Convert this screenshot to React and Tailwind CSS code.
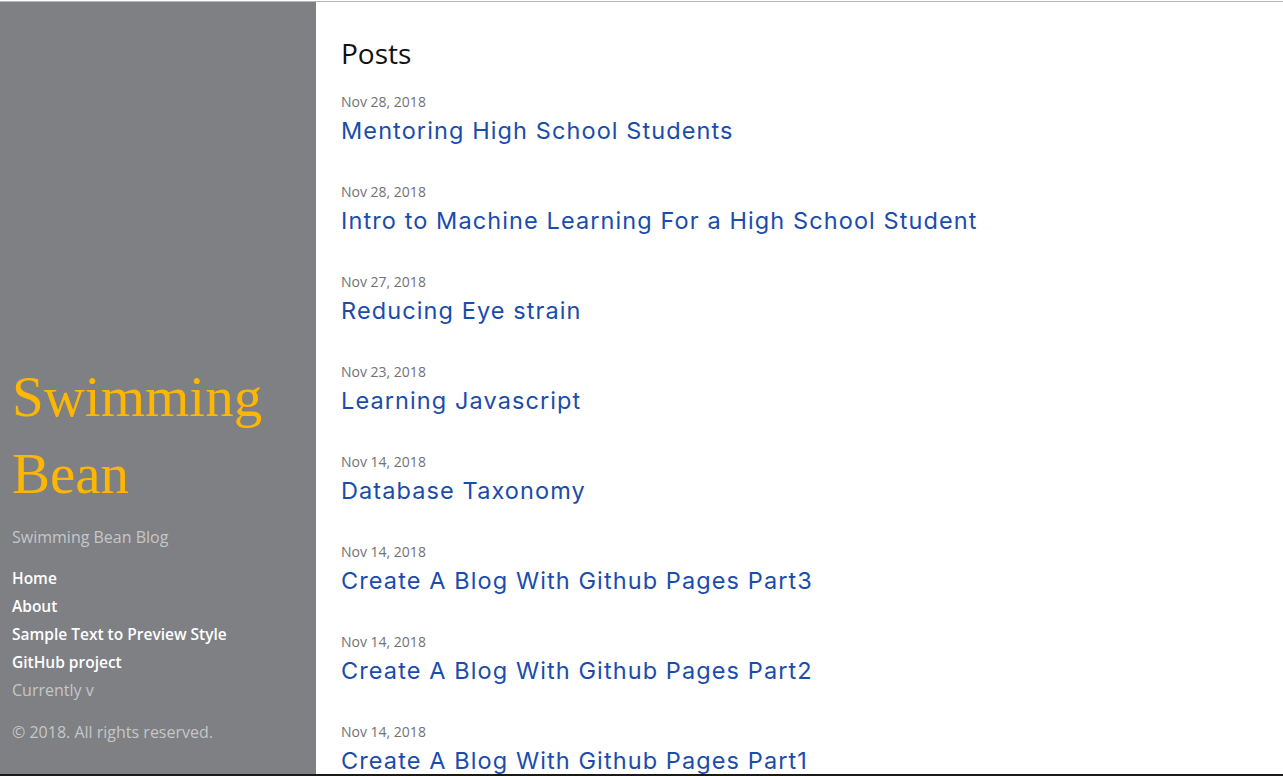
const posts = [
  { date: 'Nov 28, 2018', title: 'Mentoring High School Students' },
  { date: 'Nov 28, 2018', title: 'Intro to Machine Learning For a High School Student' },
  { date: 'Nov 27, 2018', title: 'Reducing Eye strain' },
  { date: 'Nov 23, 2018', title: 'Learning Javascript' },
  { date: 'Nov 14, 2018', title: 'Database Taxonomy' },
  { date: 'Nov 14, 2018', title: 'Create A Blog With Github Pages Part3' },
  { date: 'Nov 14, 2018', title: 'Create A Blog With Github Pages Part2' },
  { date: 'Nov 14, 2018', title: 'Create A Blog With Github Pages Part1' },
];

const navItems = ['Home', 'About', 'Sample Text to Preview Style', 'GitHub project'];

// Sidebar with blog title and nav
const Sidebar = () => {
  return (
    <aside className="w-[316px] shrink-0 bg-[#7e8084] flex flex-col justify-end px-[12px] pb-[30px] font-['Open_Sans',sans-serif]">
      <h1 className="font-['Liberation_Serif',serif] text-[57px] leading-[77px] text-[#ffb600] font-normal">
        Swimming Bean
      </h1>
      <p className="mt-[13px] text-[16px] leading-[24px] text-[#c6c7c9]">Swimming Bean Blog</p>
      <nav className="mt-[15px] flex flex-col">
        {navItems.map((item) => (
          <a key={item} href="#" className="block text-[15.5px] leading-[28px] font-semibold text-white">
            {item}
          </a>
        ))}
        <span className="block text-[16px] leading-[28px] text-[#c6c7c9]">Currently v</span>
      </nav>
      <p className="mt-[16px] text-[16px] leading-[24px] text-[#c6c7c9]">© 2018. All rights reserved.</p>
    </aside>
  );
};

function App() {
  return (
    <div className="h-[776px] w-full flex flex-col overflow-hidden bg-white">
      <div className="h-px bg-white" />
      <div className="h-px bg-[#b5b5b5]" />
      <div className="flex flex-1 min-h-0">
        <Sidebar />
        <main className="flex-1 overflow-hidden pl-[25px] pt-[34px]">
          <h1 className="font-['Open_Sans',sans-serif] text-[28px] leading-[35px] text-[#111] font-normal">Posts</h1>
          <div className="mt-[21px]">
            {posts.map((post, i) => (
              <div key={i} className="mb-[36px]">
                <span className="block font-['Open_Sans',sans-serif] text-[14px] leading-[20px] text-[#727272]">
                  {post.date}
                </span>
                <a href="#" className="block mt-[4px] font-['Inter',sans-serif] text-[23.5px] tracking-[1.1px] leading-[30px] text-[#1a4cad] whitespace-nowrap">
                  {post.title}
                </a>
              </div>
            ))}
          </div>
        </main>
      </div>
      <div className="h-[2px] bg-[#1a1a1a]" />
    </div>
  );
}

export default App;
